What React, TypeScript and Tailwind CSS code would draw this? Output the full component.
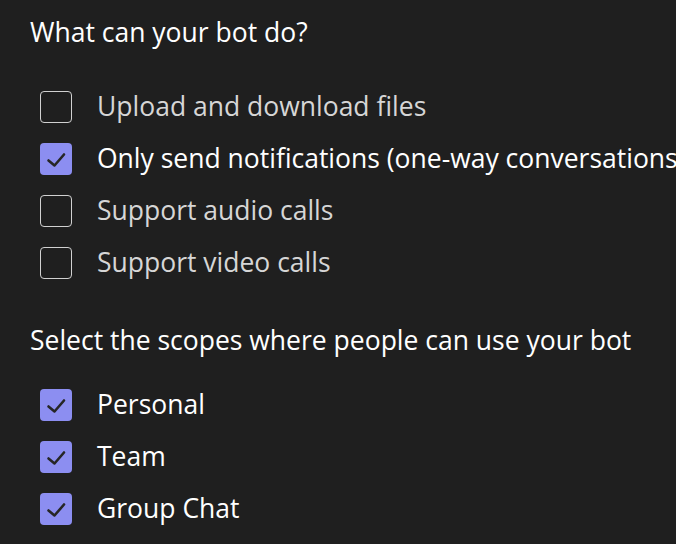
import React, { useState } from 'react';

type Item = { id: string; label: string; checked: boolean };

function CheckRow({ item, onToggle }: { item: Item; onToggle: () => void }) {
  return (
    <label className="flex items-center h-[52px] pl-[40px] cursor-pointer whitespace-nowrap" onClick={onToggle}>
      {item.checked ? (
        <span className="flex-shrink-0 w-[32px] h-[32px] rounded-[4px] bg-[#8c8ef1] flex items-center justify-center">
          <svg width="32" height="32" viewBox="0 0 32 32" fill="none">
            <path d="M8.5 17.5 L14.5 22.5 L24 11.5" stroke="#262626" strokeWidth="2.6" strokeLinecap="round" strokeLinejoin="round" />
          </svg>
        </span>
      ) : (
        <span className="flex-shrink-0 w-[32px] h-[32px] rounded-[4px] border-[1.5px] border-[#d1d1d1]" />
      )}
      <span className={`ml-[25px] text-[26.5px] ${item.checked ? 'text-white' : 'text-[#d6d6d6]'}`}>{item.label}</span>
    </label>
  );
}

export default function App() {
  const [caps, setCaps] = useState<Item[]>([
    { id: 'files', label: 'Upload and download files', checked: false },
    { id: 'notify', label: 'Only send notifications (one-way conversations)', checked: true },
    { id: 'audio', label: 'Support audio calls', checked: false },
    { id: 'video', label: 'Support video calls', checked: false },
  ]);
  const [scopes, setScopes] = useState<Item[]>([
    { id: 'personal', label: 'Personal', checked: true },
    { id: 'team', label: 'Team', checked: true },
    { id: 'group', label: 'Group Chat', checked: true },
  ]);

  const toggle = (list: Item[], set: (l: Item[]) => void, id: string) =>
    set(list.map((i) => (i.id === id ? { ...i, checked: !i.checked } : i)));

  return (
    <div className="w-[676px] h-[544px] overflow-hidden bg-[#1f1f1f] font-['Open_Sans',sans-serif]">
      <h2 className="pt-[14px] pl-[30px] text-[26.5px] leading-[36px] text-white whitespace-nowrap">What can your bot do?</h2>

      <div className="mt-[31px]">
        {caps.map((c) => (
          <CheckRow key={c.id} item={c} onToggle={() => toggle(caps, setCaps, c.id)} />
        ))}
      </div>

      <h2 className="mt-[33px] pl-[30px] text-[26.5px] leading-[36px] text-white whitespace-nowrap">Select the scopes where people can use your bot</h2>

      <div className="mt-[21px]">
        {scopes.map((s) => (
          <CheckRow key={s.id} item={s} onToggle={() => toggle(scopes, setScopes, s.id)} />
        ))}
      </div>
    </div>
  );
}
